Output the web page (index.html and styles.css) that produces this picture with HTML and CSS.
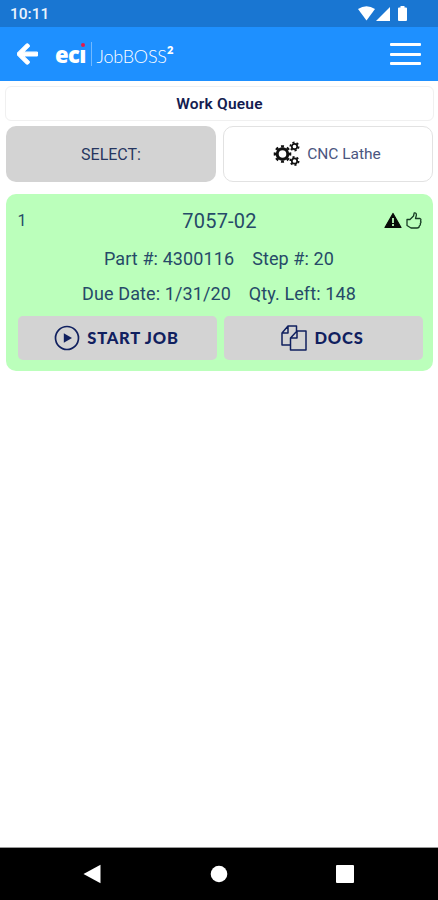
FILE: index.html
```html
<!DOCTYPE html>
<html lang="en">
<head>
<meta charset="utf-8">
<title>Work Queue</title>
<link rel="stylesheet" href="styles.css">
</head>
<body>
<div class="status">
  <span class="clock">10:11</span>
  <svg class="status-icons" width="52" height="18" viewBox="0 0 52 18" fill="#fff"><path d="M0 3Q8.500-2.500 17 3L8.500 14.500Z"/><path d="M18 15L32 1V15Z"/><path d="M42.500 0h4v1.500h1.500q1 0 1 1V14q0 1-1 1h-7q-1 0-1-1V2.500q0-1 1-1H42.500z"/></svg>
</div>
<header class="appbar">
  <svg class="back" width="21" height="24" viewBox="0 0 448 512" fill="#fff" stroke="#fff" stroke-width="22"><path d="M257.500 445.100l-22.200 22.200c-9.400 9.400-24.600 9.400-33.900 0L7 273c-9.400-9.400-9.400-24.600 0-33.900L201.400 44.700c9.400-9.400 24.600-9.400 33.900 0l22.200 22.200c9.500 9.500 9.300 25-.4 34.300L136.600 216H424c13.300 0 24 10.700 24 24v32c0 13.300-10.700 24-24 24H136.600l120.500 114.800c9.800 9.300 10 24.800.4 34.300z"/></svg>
  <div class="brand"><span class="eci">ec<span class="dotted">ı</span></span><span class="product">JobBOSS<b>²</b></span></div>
  <div class="menu"><i></i><i></i><i></i></div>
</header>
<main>
  <h1 class="title"><span>Work Queue</span></h1>
  <div class="row filters">
    <div class="select"><span>SELECT:</span></div>
    <div class="machine">
      <svg width="27" height="26" viewBox="0 0 27 26" fill="none" stroke="#111"><g><circle cx="9.500" cy="13" r="5.300" stroke-width="3"/><circle cx="9.500" cy="13" r="7.600" stroke-width="2.400" pathLength="16" stroke-dasharray="1 1" stroke-dashoffset=".5"/></g><g><circle cx="21.500" cy="5.500" r="2.700" stroke-width="1.700"/><circle cx="21.500" cy="5.500" r="4.100" stroke-width="1.800" pathLength="12" stroke-dasharray="1 1"/><circle cx="21.500" cy="20" r="2.700" stroke-width="1.700"/><circle cx="21.500" cy="20" r="4.100" stroke-width="1.800" pathLength="12" stroke-dasharray="1 1"/></g></svg>
      <span>CNC Lathe</span>
    </div>
  </div>
  <section class="job">
    <div class="job-head">
      <span class="index">1</span>
      <span class="number">7057-02</span>
      <span class="flags">
        <svg width="18" height="18" viewBox="0 0 18 18"><path d="M9 1.500L17 15.500H1Z" fill="#080c08" stroke="#080c08" stroke-width="1.200" stroke-linejoin="round"/><path d="M9 6v5M9 12v2" stroke="#bfb" stroke-width="1.800"/></svg>
        <svg width="16" height="18" viewBox="0 0 16 18" fill="none" stroke="#173c24" stroke-width="1.300" stroke-linejoin="round"><path d="M1 7.500H4L7.500 4 8.200 1Q10.700 .5 10.300 3.500L9.500 6.500H14Q15.500 7 14.500 9 15.500 10 14.300 11.500 14.800 13 13.300 14 13.300 16 11 16H5L1 13.500Z"/></svg>
      </span>
    </div>
    <div class="details part"><span>Part #: 4300116</span><span>Step #: 20</span></div>
    <div class="details due"><span>Due Date: 1/31/20</span><span>Qty. Left: 148</span></div>
    <div class="row actions">
      <div class="action start"><svg width="26" height="26" viewBox="0 0 26 26"><circle cx="13" cy="13" r="11.500" fill="none" stroke="#10205f" stroke-width="1.700"/><path d="M9.800 8.300L18 13 9.800 17.700Z" fill="#10205f"/></svg><span>START JOB</span></div>
      <div class="action docs"><svg width="26" height="26" viewBox="0 0 26 26" fill="none" stroke="#10205f" stroke-width="1.500" stroke-linejoin="round"><path d="M9.500 20H1V8L7 1H15.500V6M7 1V8H1M9.500 25V13L16 6H25V25ZM16 6V13H9.500"/></svg><span>DOCS</span></div>
    </div>
  </section>
</main>
<nav class="navbar">
  <svg width="18" height="20" viewBox="0 0 18 20" fill="#fff"><path d="M.5 10L17.500 .8V19.200Z"/></svg>
  <svg width="18" height="18" viewBox="0 0 18 18" fill="#fff"><circle cx="9" cy="9" r="8.300"/></svg>
  <svg width="18" height="18" viewBox="0 0 18 18" fill="#fff"><rect width="18" height="18" rx="1"/></svg>
</nav>
</body>
</html>
```
FILE: styles.css
```css
* { box-sizing: border-box; }
body { margin: 0; height: 900px; display: flex; flex-direction: column; background: #fff; color: #264a68; font-family: Roboto, sans-serif; }
svg { display: block; flex: none; }
.status { height: 27px; background: #1976d2; display: flex; justify-content: space-between; padding: 0 28px 0 10px; }
.clock { color: #e9f3fd; font-size: 15.5px; font-weight: 500; line-height: 29px; }
.status-icons { margin-top: 6px; }
.appbar { height: 54px; background: #1e90ff; display: flex; align-items: center; padding: 0 17px 0 17px; }
.brand { display: flex; align-items: center; margin-left: 17px; height: 26px; color: #fff; }
.eci { font: 800 22px/26px "Open Sans", sans-serif; letter-spacing: -.6px; width: 35.500px; }
.dotted { position: relative; }
.dotted::before { content: ""; position: absolute; left: 1.500px; top: 4px; width: 4px; height: 4px; border-radius: 50%; background: #e5194b; }
.product { border-left: 1px solid #72b9ff; height: 24px; padding-left: 5px; font: 300 18px/28px Lato, sans-serif; letter-spacing: -.2px; }
.product b { font-weight: 700; font-size: 21px; line-height: 1px; }
.menu { margin-left: auto; width: 31px; display: flex; flex-direction: column; gap: 6.500px; }
.menu i { height: 3px; background: #fff; border-radius: 1px; }
main { flex: 1; padding: 5px 5px 0 6px; }
.title { margin: 0 -1px; height: 35px; border: 1.500px solid #f0f0f0; border-radius: 6px; text-align: center; font-size: 15.5px; letter-spacing: .2px; line-height: 35px; font-weight: 600; color: #141c50; }
.row { display: flex; gap: 7px; }
.filters { margin-top: 5px; height: 56px; }
.filters > div { width: 210px; border-radius: 10px; display: flex; align-items: center; justify-content: center; font-size: 16px; }
.select { background: #d3d3d3; color: #26365f; }
.machine { border: 1.500px solid #e2e2e2; gap: 7px; padding-right: 2px; color: #4b567f; }
.machine span { font-size: 15.5px; }
.job { margin-top: 12px; width: 427px; height: 177px; border-radius: 10px; background: #bfb; padding: 10px 10.500px 0 11.500px; }
.job-head { display: grid; grid-template-columns: 1fr auto 1fr; align-items: center; height: 33px; padding-right: 1px; }
.index { font-size: 16px; }
.number { font-size: 20px; letter-spacing: .2px; }
.flags { display: flex; gap: 4px; justify-self: end; }
.details { display: flex; justify-content: center; gap: 18px; padding-right: 2px; font-size: 18px; letter-spacing: .1px; line-height: 22px; white-space: nowrap; }
.part { margin-top: 11px; }
.due { margin-top: 13px; }
.actions { margin-top: 11px; }
.action { width: 199px; height: 44px; border-radius: 5px; background: #d3d3d3; display: flex; align-items: center; justify-content: center; gap: 7px; padding-right: 1px; font: 900 16.5px Lato, sans-serif; letter-spacing: .8px; color: #10205f; }
.navbar { height: 53px; border-top: 1px solid #999; background: #000; display: flex; justify-content: space-between; align-items: center; padding: 0 84px 0 83px; }
```
